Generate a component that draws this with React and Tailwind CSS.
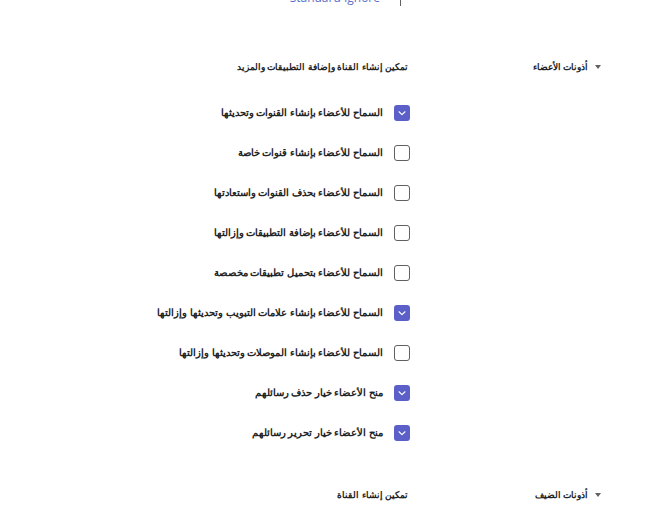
import { useState } from "react";

const perms = [
  { label: "السماح للأعضاء بإنشاء القنوات وتحديثها", on: true },
  { label: "السماح للأعضاء بإنشاء قنوات خاصة", on: false },
  { label: "السماح للأعضاء بحذف القنوات واستعادتها", on: false },
  { label: "السماح للأعضاء بإضافة التطبيقات وإزالتها", on: false },
  { label: "السماح للأعضاء بتحميل تطبيقات مخصصة", on: false },
  { label: "السماح للأعضاء بإنشاء علامات التبويب وتحديثها وإزالتها", on: true },
  { label: "السماح للأعضاء بإنشاء الموصلات وتحديثها وإزالتها", on: false },
  { label: "منح الأعضاء خيار حذف رسائلهم", on: true },
  { label: "منح الأعضاء خيار تحرير رسائلهم", on: true },
];

function Checkbox({ checked, onChange }) {
  if (checked) {
    return (
      <button onClick={onChange} className="w-4 h-4 rounded-[3px] bg-[#5b5fc7] flex items-center justify-center shrink-0">
        <svg width="10" height="10" viewBox="0 0 10 10" fill="none">
          <path d="M2 3.8 L5 6.6 L8 3.8" stroke="white" strokeWidth="1.2" strokeLinecap="round" strokeLinejoin="round" />
        </svg>
      </button>
    );
  }
  return <button onClick={onChange} className="w-4 h-4 rounded-[3px] border border-[#616161] bg-white shrink-0" />;
}

function SectionHeader({ title, desc }) {
  return (
    <div className="flex items-center pr-[70px]">
      <div className="w-[193px] flex items-center gap-[7px] shrink-0">
        <span className="w-0 h-0 border-x-[3px] border-x-transparent border-t-[4px] border-t-[#616161]"></span>
        <span className="text-[9.3px] font-bold text-[#242424]">{title}</span>
      </div>
      <span className="text-[9.3px] font-bold text-[#242424]">{desc}</span>
    </div>
  );
}

export default function App() {
  const [items, setItems] = useState(perms);

  function toggle(i) {
    setItems(items.map((it, idx) => (idx === i ? { ...it, on: !it.on } : it)));
  }

  return (
    <div dir="rtl" className="w-full h-[521px] overflow-hidden bg-white" style={{ fontFamily: '"Noto Sans", sans-serif' }}>
      <div className="h-[6px]">
        <div className="flex items-start pr-[270px] -mt-[9px]">
          <span className="w-px h-[15px] bg-[#616161]"></span>
          <span dir="ltr" className="mr-[20px] text-[12px] leading-[14px] text-[#5b6fc7]" style={{ fontFamily: '"Open Sans", sans-serif' }}>Standard Ignore</span>
        </div>
      </div>

      <div className="mt-[63px]">
        <SectionHeader title="أذونات الأعضاء" desc="تمكين إنشاء القناة وإضافة التطبيقات والمزيد" />
      </div>

      <div className="pr-[261px] mt-[31px] flex flex-col gap-6">
        {items.map((it, i) => (
          <div key={i} className="flex items-center gap-[11px] h-4">
            <Checkbox checked={it.on} onChange={() => toggle(i)} />
            <span className="text-[10px] font-bold text-[#242424] whitespace-nowrap">{it.label}</span>
          </div>
        ))}
      </div>

      <div className="mt-[47px]">
        <SectionHeader title="أذونات الضيف" desc="تمكين إنشاء القناة" />
      </div>
    </div>
  );
}
